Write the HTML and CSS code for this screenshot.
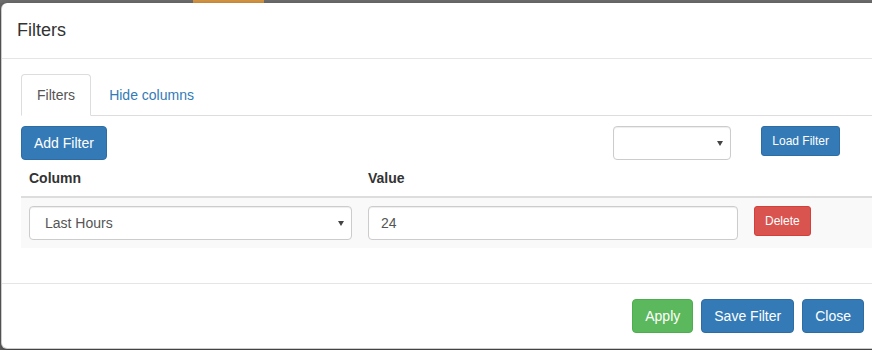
FILE: index.html
```html
<!DOCTYPE html>
<html lang="en">
<head>
    <meta charset="UTF-8">
    <meta name="viewport" content="width=device-width, initial-scale=1.0">
    <title>Filters</title>
    <link rel="stylesheet" href="styles.css">
</head>
<body>

    <div class="topbar"><span class="topbar-tab"></span></div>

    <div class="modal">
        <div class="modal-header">
            <h4 class="modal-title">Filters</h4>
        </div>

        <div class="modal-body">
            <ul class="nav-tabs">
                <li class="active"><a href="#filters">Filters</a></li>
                <li><a href="#columns">Hide columns</a></li>
            </ul>

            <div class="tab-pane">
                <div class="toolbar">
                    <button class="btn btn-primary">Add Filter</button>
                    <div class="select-wrap saved-select">
                        <select class="form-control">
                            <option value=""></option>
                        </select>
                    </div>
                    <button class="btn btn-primary btn-sm load-btn">Load Filter</button>
                </div>

                <table class="table">
                    <thead>
                        <tr>
                            <th class="col-column">Column</th>
                            <th class="col-value">Value</th>
                            <th></th>
                        </tr>
                    </thead>
                    <tbody>
                        <tr>
                            <td>
                                <div class="select-wrap">
                                    <select class="form-control">
                                        <option>Last Hours</option>
                                    </select>
                                </div>
                            </td>
                            <td><input type="text" class="form-control" value="24"></td>
                            <td><button class="btn btn-danger btn-sm">Delete</button></td>
                        </tr>
                    </tbody>
                </table>
            </div>
        </div>

        <div class="modal-footer">
            <button class="btn btn-success">Apply</button>
            <button class="btn btn-primary">Save Filter</button>
            <button class="btn btn-primary">Close</button>
        </div>
    </div>

</body>
</html>
```

FILE: styles.css
```css
html, body {
    overflow: hidden;
}
body {
    font-family: "Liberation Sans", Arial, Helvetica, sans-serif;
    font-size: 14px;
    line-height: 1.42857;
    color: #333;
    margin: 0;
    background-color: #6a6a6a;
    height: 350px;
}
.topbar {
    height: 3px;
    background-color: #707070;
}
.topbar-tab {
    display: block;
    margin-left: 193px;
    width: 71px;
    height: 3px;
    background-color: #dc9944;
}
.modal {
    margin-left: 1px;
    width: 879px;
    background: white;
    border: 1px solid rgba(0,0,0,0.2);
    border-top: 0;
    border-radius: 6px;
    box-shadow: 0 3px 9px rgba(0,0,0,0.5);
    box-sizing: border-box;
}
.modal-header {
    padding: 15px 15px 14px;
    border-bottom: 1px solid #e5e5e5;
}
.modal-title {
    margin: 0;
    font-size: 18px;
    font-weight: 500;
    line-height: 1.42857;
}
.modal-body {
    padding: 15px 5px 15px 19px;
}
.nav-tabs {
    display: flex;
    list-style: none;
    margin: 0;
    padding: 0;
    border-bottom: 1px solid #ddd;
}
.nav-tabs li {
    margin-bottom: -1px;
}
.nav-tabs a {
    display: block;
    margin-right: 2px;
    padding: 10px 15px;
    line-height: 20px;
    border: 1px solid transparent;
    border-radius: 4px 4px 0 0;
    color: #337ab7;
    text-decoration: none;
}
.nav-tabs .active a {
    color: #555;
    background: white;
    border-color: #ddd #ddd transparent;
}
.toolbar {
    display: flex;
    align-items: flex-start;
    margin-top: 10px;
}
.saved-select {
    margin-left: auto;
    width: 118px;
}
.load-btn {
    margin-left: 30px;
    margin-right: 34px;
}
.btn {
    display: inline-block;
    padding: 6px 12px;
    font-family: inherit;
    font-size: 14px;
    line-height: 20px;
    border: 1px solid transparent;
    border-radius: 4px;
    color: white;
    cursor: pointer;
}
.btn-sm {
    padding: 5px 10px;
    font-size: 12px;
    line-height: 18px;
    border-radius: 3px;
}
.btn-primary {
    background-color: #337ab7;
    border-color: #2e6da4;
}
.btn-success {
    background-color: #5cb85c;
    border-color: #4cae4c;
}
.btn-danger {
    background-color: #d9534f;
    border-color: #d43f3a;
}
.form-control {
    display: block;
    width: 100%;
    height: 34px;
    padding: 6px 12px;
    font-family: inherit;
    font-size: 14px;
    line-height: 20px;
    color: #555;
    background: white;
    border: 1px solid #ccc;
    border-radius: 4px;
    box-shadow: inset 0 1px 1px rgba(0,0,0,0.075);
    box-sizing: border-box;
}
select.form-control {
    appearance: none;
    -webkit-appearance: none;
    padding-left: 15px;
}
.select-wrap {
    position: relative;
}
.select-wrap::after {
    content: "";
    position: absolute;
    right: 8px;
    top: 15px;
    border-left: 3px solid transparent;
    border-right: 3px solid transparent;
    border-top: 5px solid #444;
}
.table {
    width: 100%;
    margin-bottom: 20px;
    border-collapse: collapse;
    border-spacing: 0;
}
.table th, .table td {
    padding: 8px;
    line-height: 20px;
    text-align: left;
    vertical-align: top;
}
.table th {
    border-bottom: 2px solid #ddd;
}
.table td {
    border-top: 1px solid #ddd;
}
.table tbody tr {
    background-color: #f9f9f9;
}
.col-column {
    width: 323px;
}
.col-value {
    width: 370px;
}
.modal-footer {
    display: flex;
    justify-content: flex-end;
    gap: 8px;
    padding: 15px;
    border-top: 1px solid #e5e5e5;
}
```
